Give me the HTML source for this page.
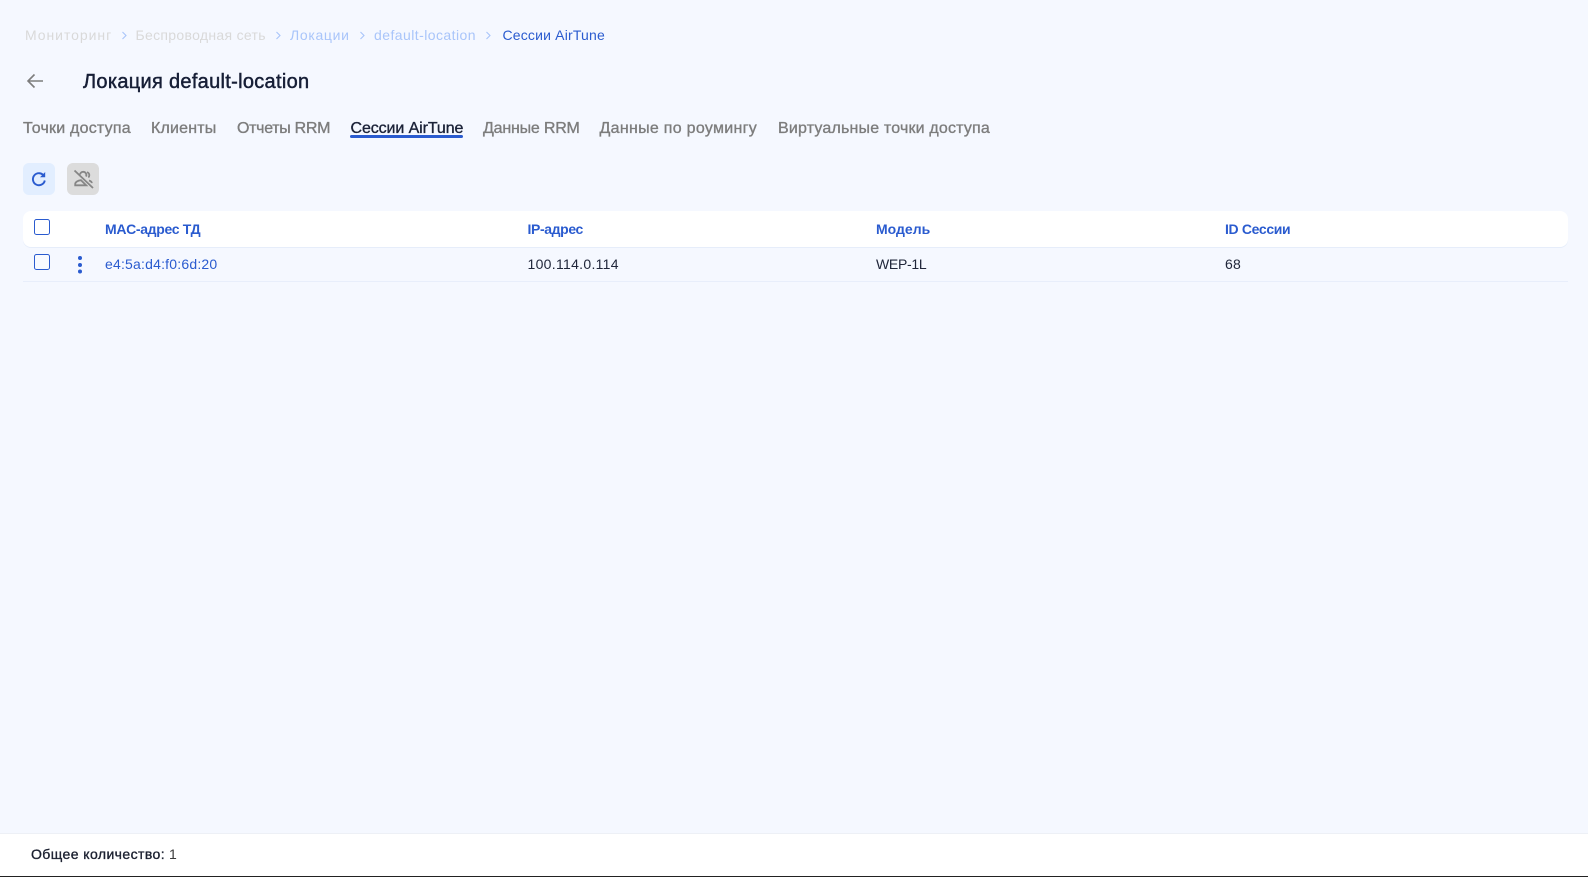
<!DOCTYPE html>
<html lang="ru">
<head>
<meta charset="utf-8">
<title>Сессии AirTune</title>
<style>
html,body{margin:0;padding:0;width:1588px;height:877px;overflow:hidden;background:#f5f8ff;font-family:"Liberation Sans","Noto Sans CJK SC",sans-serif;}
.t{position:absolute;white-space:nowrap;line-height:20px;font-size:14px;}
.bc{top:25px}
.gray{color:#d9d9d9}.lb{color:#a9c5fa}.bl{color:#2a5bcf}
.tab{top:119px;font-size:16px;color:#7d7d7d;-webkit-text-stroke:.35px #7d7d7d}
.th{top:219px;color:#2a5bcf;font-weight:bold;font-size:14px}
.td{top:254px;color:#20263a;letter-spacing:.2px}
.chev{position:absolute;top:30px}
.abs{position:absolute}
.cb{position:absolute;left:34px;width:14px;height:14px;border:1.5px solid #2a5bcf;border-radius:2.5px;background:#fff}
</style>
</head>
<body>
<span class="t bc gray" style="left:25px;letter-spacing:.95px">Мониторинг</span>
<svg class="chev" style="left:121px" width="7" height="11" viewBox="0 0 7 11"><path d="M1.500 2l3.500 3.500L1.500 9" fill="none" stroke="#a9c5fa" stroke-width="1.1"/></svg>
<span class="t bc gray" style="left:135.5px;letter-spacing:.31px">Беспроводная сеть</span>
<svg class="chev" style="left:275px" width="7" height="11" viewBox="0 0 7 11"><path d="M1.500 2l3.500 3.500L1.500 9" fill="none" stroke="#a9c5fa" stroke-width="1.1"/></svg>
<span class="t bc lb" style="left:290px;letter-spacing:.68px">Локации</span>
<svg class="chev" style="left:359px" width="7" height="11" viewBox="0 0 7 11"><path d="M1.500 2l3.500 3.500L1.500 9" fill="none" stroke="#a9c5fa" stroke-width="1.1"/></svg>
<span class="t bc lb" style="left:374px;letter-spacing:.44px">default-location</span>
<svg class="chev" style="left:485px" width="7" height="11" viewBox="0 0 7 11"><path d="M1.500 2l3.500 3.500L1.500 9" fill="none" stroke="#a9c5fa" stroke-width="1.1"/></svg>
<span class="t bc bl" style="left:502.5px;letter-spacing:.18px">Сессии AirTune</span>

<svg class="abs" style="left:25px;top:71px" width="20" height="20" viewBox="0 0 20 20"><path d="M18 10H3M9.500 3.500L3 10l6.500 6.500" fill="none" stroke="#7d7d7d" stroke-width="1.6"/></svg>
<span class="t" style="left:83px;top:69px;line-height:26px;font-size:20px;color:#161e36;-webkit-text-stroke:.45px #161e36;letter-spacing:.3px">Локация default-location</span>

<span class="t tab" style="left:23px;letter-spacing:.21px">Точки доступа</span>
<span class="t tab" style="left:151px;letter-spacing:.19px">Клиенты</span>
<span class="t tab" style="left:237px;letter-spacing:-.3px">Отчеты RRM</span>
<span class="t tab" style="left:350.5px;letter-spacing:-.1px;color:#1b2238;-webkit-text-stroke:.35px #1b2238">Сессии AirTune</span>
<span class="t tab" style="left:483px;letter-spacing:-.2px">Данные RRM</span>
<span class="t tab" style="left:599.5px;letter-spacing:.29px">Данные по роумингу</span>
<span class="t tab" style="left:778px;letter-spacing:.18px">Виртуальные точки доступа</span>
<div class="abs" style="left:350px;top:135px;width:113px;height:3px;background:#2a5bcf;border-radius:2px"></div>

<div class="abs" style="left:23px;top:163px;width:32px;height:32px;border-radius:6px;background:#e2eeff"></div>
<svg class="abs" style="left:29px;top:169px" width="20" height="20" viewBox="0 0 20 20"><path d="M15 7a6 6 0 1 0 .8 4.500" fill="none" stroke="#2a5bcf" stroke-width="1.9"/><path d="M16.200 3v5.200H11z" fill="#2a5bcf"/></svg>
<div class="abs" style="left:67px;top:163px;width:32px;height:32px;border-radius:6px;background:#dcdcdc"></div>
<svg class="abs" style="left:72px;top:168px" width="22" height="22" viewBox="0 0 22 22"><g fill="none" stroke="#868686" stroke-width="1.8"><path d="M2.500 2.500L21 20"/><path d="M3.200 17.300v-1.200c0-2 2.600-3.600 5.800-3.900l5.200 5.100z"/><path d="M8 6.500A3.200 3.200 0 0 1 11.200 3.800 3.200 3.200 0 0 1 14 8.500"/><path d="M15 4.200a3 3 0 0 1 2.300 3c0 .9-.4 1.700-1 2.200M17 12.500c1.700.5 2.800 1.400 2.800 2.600"/></g></svg>

<div class="abs" style="left:23px;top:211px;width:1545px;height:36px;background:#fff;border-radius:8px;box-shadow:0 1px 0 #e6edfa"></div>
<div class="cb" style="top:219px"></div>
<span class="t th" style="left:105px;letter-spacing:-.33px">MAC-адрес ТД</span>
<span class="t th" style="left:527.5px;letter-spacing:-.38px">IP-адрес</span>
<span class="t th" style="left:876px">Модель</span>
<span class="t th" style="left:1225px;letter-spacing:-.34px">ID Сессии</span>

<div class="cb" style="top:254px;background:#f8faff"></div>
<svg class="abs" style="left:76px;top:255px" width="8" height="20" viewBox="0 0 8 20"><g fill="#2a5bcf"><circle cx="4" cy="3" r="2"/><circle cx="4" cy="10" r="2"/><circle cx="4" cy="16.500" r="2"/></g></svg>
<span class="t td" style="left:105px;color:#2a5bcf">e4:5a:d4:f0:6d:20</span>
<span class="t td" style="left:527.5px;letter-spacing:.3px">100.114.0.114</span>
<span class="t td" style="left:876px;letter-spacing:-.3px">WEP-1L</span>
<span class="t td" style="left:1225px">68</span>
<div class="abs" style="left:23px;top:281px;width:1545px;height:1px;background:#e8eefb"></div>

<div class="abs" style="left:0;top:833px;width:1588px;height:43px;background:#fff;border-top:1px solid #edf0f6;box-sizing:border-box"></div>
<div class="abs" style="left:0;top:876px;width:1588px;height:1px;background:#222"></div>
<span class="t" style="left:31px;top:844px;color:#1b2030;-webkit-text-stroke:.35px #1b2030;letter-spacing:.42px">Общее количество:</span>
<span class="t" style="left:169px;top:844px;color:#3a3a3a">1</span>
</body>
</html>
